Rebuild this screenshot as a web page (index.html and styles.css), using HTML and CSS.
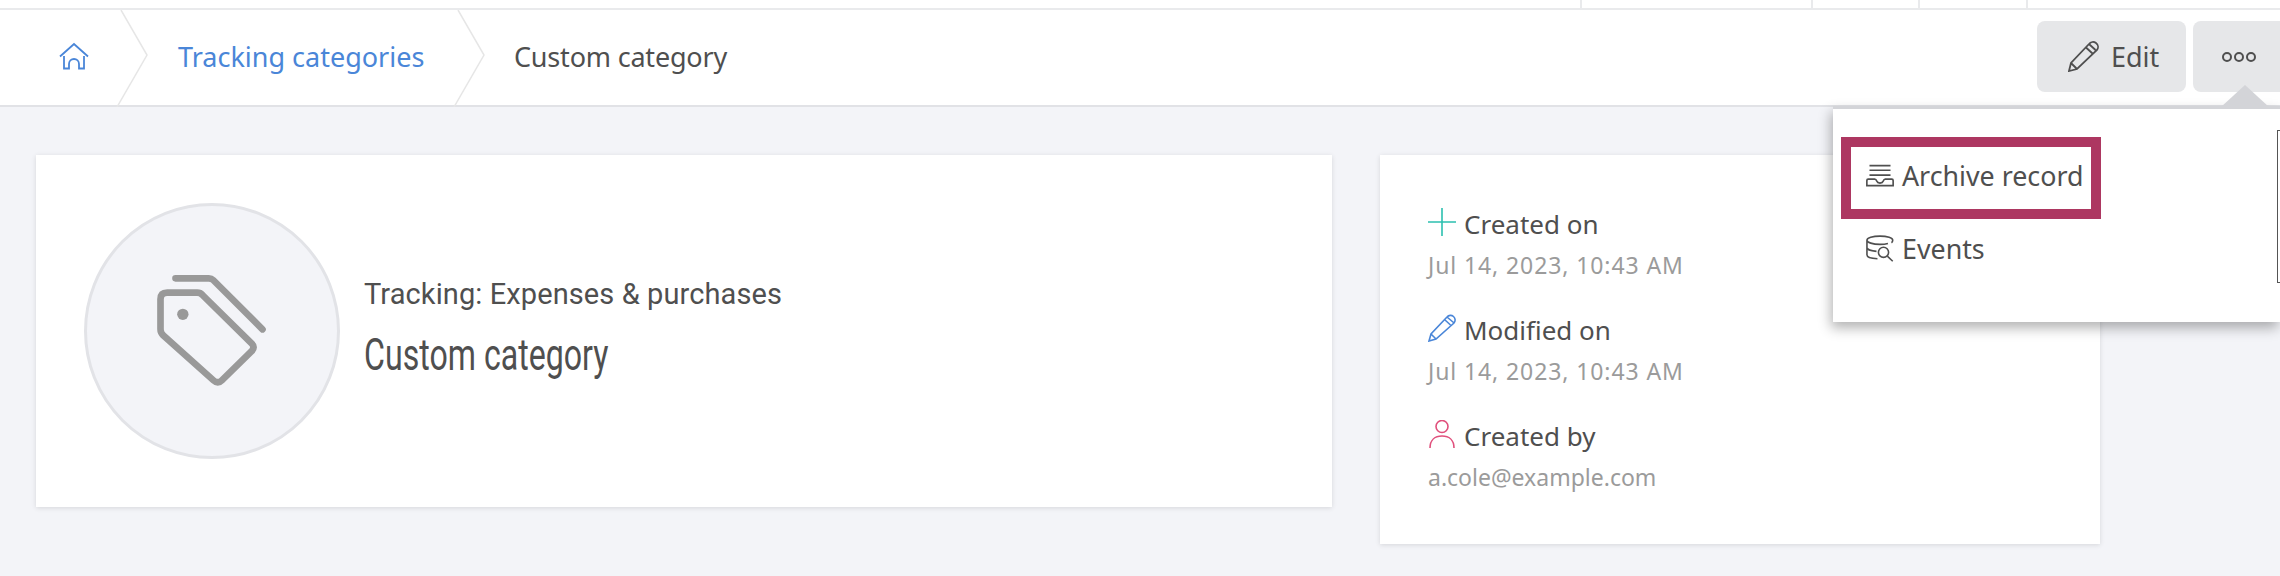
FILE: index.html
```html
<!DOCTYPE html>
<html lang="en">
<head>
<meta charset="utf-8">
<title>Custom category</title>
<link rel="stylesheet" href="styles.css">
</head>
<body>
<div class="strip">
  <span class="cell c1"></span><span class="cell c2"></span><span class="cell c3"></span><span class="cell c4"></span>
</div>
<header class="bar">
  <nav class="crumbs">
    <a class="crumb home">
      <svg class="home-ico" viewBox="58 43 32 29"><path d="M60 57.500 74 45l14 12.500M64 57v12.500h5V65a5 5 0 0 1 10 0v4.500h5V57"/></svg>
      <svg class="chev" viewBox="0 0 32 97"><path d="M5 0 31 45 1 97"/></svg>
    </a>
    <a class="crumb link">Tracking categories
      <svg class="chev" viewBox="0 0 32 97"><path d="M5 0 31 45 1 97"/></svg>
    </a>
    <span class="crumb current">Custom category</span>
  </nav>
  <div class="actions">
    <button class="btn edit">
      <svg class="pencil" viewBox="0 0 31 31"><path d="M1 30 3 22 21 3a4 4 0 0 1 8 6L9 28ZM3 22l6 6M18 6.500l6.500 6M21.500 3.500l6 5.500"/></svg>
      Edit
    </button>
    <button class="btn more"><i class="dot"></i><i class="dot"></i><i class="dot"></i></button>
  </div>
  <div class="menu">
    <i class="caret"></i>
    <div class="menu-item active">
      <svg class="m-ico archive" viewBox="138 186 84 70"><path d="M148 191h64M148 205h64M148 220h64M140 252v-16q0-4 4-4h20q4 0 6 6t10 6 10-6 6-6h20q4 0 4 4v16Z"/></svg>
      Archive record
    </div>
    <div class="menu-item events">
      <svg class="m-ico db" viewBox="136 396 88 84"><path d="M172 470c-20 0-33-5-33-12v-46c0-7 18-13 41-13s40 6 40 13c0 4-1 6-4 8M139 412c0 7 18 13 41 13 9 0 18-1 25-3M139 435c0 6 14 11 30 12"/><circle cx="191" cy="450" r="16"/><path d="m203 462 17 16"/></svg>
      Events
    </div>
    <i class="scroll"></i>
  </div>
</header>
<main class="content">
  <section class="card hero">
    <div class="avatar">
      <svg class="tag" viewBox="280 270 350 360"><path d="M322 335h90q10 0 16 7l148 146q10 10 0 22l-90 88q-12 12-25 0L310 463q-8-8-8-18v-90q0-20 20-20ZM347 292h100q8 0 13 5l148 148"/><circle class="tag-dot" cx="369" cy="400" r="17"/></svg>
    </div>
    <div class="hero-text">
      <div class="subtitle">Tracking: Expenses &amp; purchases</div>
      <h1 class="title">Custom category</h1>
    </div>
  </section>
  <aside class="card meta">
    <div class="meta-item">
      <div class="meta-label"><svg class="meta-ico plus" viewBox="0 0 28 28"><path d="M14 0v28M0 14h28"/></svg>Created on</div>
      <div class="meta-value date">Jul 14, 2023, 10:43 AM</div>
    </div>
    <div class="meta-item">
      <div class="meta-label"><svg class="meta-ico pen" viewBox="0 0 28 28"><path d="M1 27 3 20 19 3a4 4 0 0 1 7 6L8 25ZM3 20l5 5M16.500 5.500l6 5.500M19 3l6.500 5.500"/></svg>Modified on</div>
      <div class="meta-value date">Jul 14, 2023, 10:43 AM</div>
    </div>
    <div class="meta-item">
      <div class="meta-label"><svg class="meta-ico user" viewBox="0 0 28 28"><circle cx="14" cy="6.500" r="6"/><path d="M2 28c0-8 5-12 12-12s12 4 12 12"/></svg>Created by</div>
      <div class="meta-value">a.cole@example.com</div>
    </div>
  </aside>
</main>
</body>
</html>
```
FILE: styles.css
```css
* { box-sizing: border-box; }
html, body { margin: 0; height: 576px; overflow: hidden; }
body {
  background: #f3f4f8;
  color: #4f4f4f;
  font-family: "Noto Sans", sans-serif;
  font-size: 26px;
}
.strip {
  height: 10px;
  background: #fff;
  border-bottom: 2px solid #e9eaec;
  display: flex;
  justify-content: flex-end;
}
.cell { border-left: 2px solid #e9eaec; height: 8px; }
.c1 { width: 231px; }
.c2 { width: 107px; }
.c3 { width: 108px; }
.c4 { width: 254px; }

.bar {
  position: relative;
  height: 97px;
  background: #fff;
  border-bottom: 2px solid #e1e2e6;
  display: flex;
  justify-content: space-between;
  align-items: flex-start;
}
.crumbs { display: flex; height: 93px; align-items: center; font-size: 27px; }
.crumb { position: relative; display: flex; align-items: center; height: 100%; white-space: nowrap; }
.home { width: 178px; padding-left: 58px; }
.link { width: 336px; color: #4a86d8; }
.current { letter-spacing: -.2px; }
.chev { position: absolute; top: 0; width: 32px; height: 97px; fill: none; stroke: #e6e6e6; stroke-width: 1.500; }
.home .chev { left: 116px; }
.link .chev { left: 275px; }
.home-ico { width: 32px; height: 29px; fill: none; stroke: #4a86d8; stroke-width: 1.800; }

.actions { display: flex; gap: 7px; padding-top: 11px; }
.btn {
  height: 71px;
  border: 0;
  border-radius: 8px;
  background: #e6e7e9;
  color: #4f4f4f;
  font: inherit;
  font-size: 27px;
  display: flex;
  align-items: center;
  padding: 0;
}
.edit { width: 149px; padding-left: 31px; gap: 12px; }
.more { width: 87px; padding-left: 29px; border-radius: 8px 0 0 8px; gap: 2px; }
.pencil { width: 31px; height: 31px; fill: none; stroke: #4f4f4f; stroke-width: 1.800; }
.dot { width: 10px; height: 10px; border: 2px solid #4f4f4f; border-radius: 50%; }

.menu {
  position: absolute;
  right: 0;
  top: 96px;
  width: 447px;
  height: 216px;
  background: #fff;
  border-top: 3px solid #d3d4d8;
  box-shadow: -2px 6px 12px rgba(0, 0, 0, .3);
  padding: 28px 0 0 8px;
  font-size: 26.800px;
  z-index: 2;
}
.caret {
  position: absolute;
  top: -24px;
  left: 388px;
  width: 0;
  height: 0;
  border-left: 24px solid transparent;
  border-right: 24px solid transparent;
  border-bottom: 22px solid #d3d4d8;
}
.menu-item {
  display: flex;
  align-items: center;
  gap: 8px;
  width: 260px;
  height: 72px;
  padding-left: 25px;
}
.menu-item.active { height: 82px; border: 10px solid #ad3761; padding: 0 0 5px 15px; }
.menu-item.events { margin-top: -7px; }
.m-ico { fill: none; stroke: #4f4f4f; stroke-width: 5; }
.archive { width: 28px; height: 23px; }
.db { width: 28px; height: 27px; }
.scroll {
  position: absolute;
  left: 444px;
  top: 21px;
  height: 153px;
  width: 3px;
  border: 1px solid #555;
  border-right: 0;
}

.content { display: flex; align-items: flex-start; gap: 48px; padding: 48px 36px; }
.card { background: #fff; box-shadow: 0 1px 5px rgba(0, 0, 0, .12); }
.hero { width: 1296px; height: 352px; display: flex; align-items: center; padding-left: 48px; gap: 24px; }
.avatar {
  width: 256px;
  height: 256px;
  border-radius: 50%;
  background: #f3f4f8;
  border: 3px solid #e2e3e7;
  display: flex;
  align-items: center;
  justify-content: center;
}
.tag { width: 117px; height: 120px; fill: none; stroke: #999; stroke-width: 20; stroke-linecap: round; margin-left: -1px; }
.tag-dot { fill: #999; stroke: none; }
.hero-text { display: flex; flex-direction: column; gap: 19px; margin-top: -7px; }
.subtitle { font-family: "Roboto", sans-serif; font-size: 29px; letter-spacing: .1px; line-height: 36px; }
.title {
  margin: 0;
  font-family: "Roboto", sans-serif;
  font-weight: 400;
  font-size: 45px;
  line-height: 48px;
  white-space: nowrap;
  transform: scaleX(.714);
  transform-origin: left center;
}

.meta { width: 720px; height: 389px; padding: 50px 48px 0; display: flex; flex-direction: column; gap: 27px; }
.meta-label { display: flex; align-items: center; gap: 8px; height: 38px; }
.meta-ico { width: 28px; height: 28px; fill: none; stroke-width: 1.600; margin-top: -4px; }
.plus { stroke: #2cc0b0; }
.pen { stroke: #4a86d8; }
.user { stroke: #e0507c; }
.meta-value { color: #9b9b9b; font-size: 23px; line-height: 38px; margin-top: 3px; }
.date { letter-spacing: .9px; }
```
